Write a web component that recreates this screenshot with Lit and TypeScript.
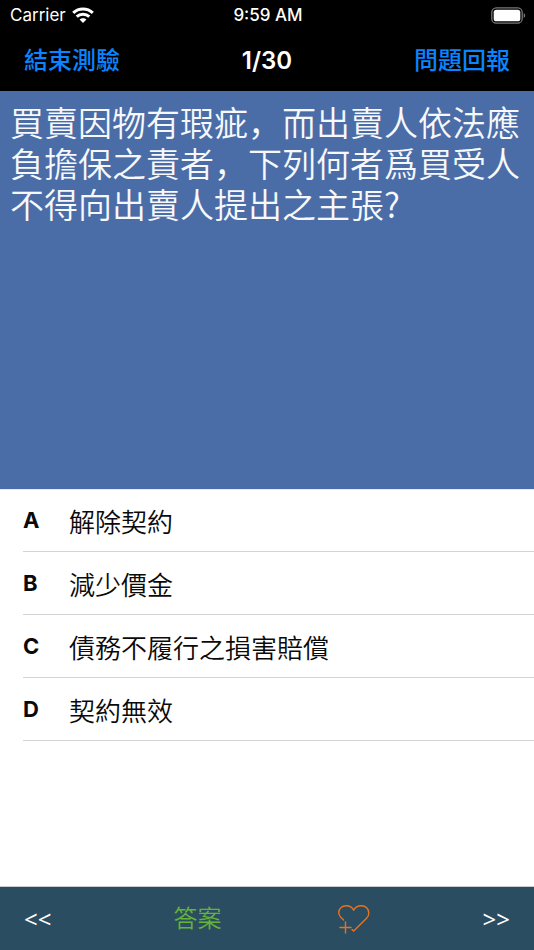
import { LitElement, html, css, svg } from "lit";
import { customElement, property, state } from "lit/decorators.js";

interface Choice {
  key: string;
  text: string;
}

const wifiIcon = svg`
  <svg class="wifi" viewBox="0 0 22 16" width="22" height="16" aria-hidden="true">
    <g fill="none" stroke="#fff" stroke-width="3">
      <path d="M1.2 5.8C6.7 .6 15.3 .6 20.8 5.8" />
      <path d="M4.7 9.6C8.2 6.3 13.8 6.3 17.3 9.6" />
    </g>
    <path fill="#fff" d="M11 16l-3.4-3.5c1.9-1.8 4.9-1.8 6.8 0z" />
  </svg>`;

const batteryIcon = svg`
  <svg class="battery" viewBox="0 0 35 17" width="35" height="17" aria-hidden="true">
    <rect x=".8" y=".8" width="30.4" height="15.4" rx="4.5" fill="none" stroke="#777" stroke-width="1.3" />
    <rect x="2.7" y="2.7" width="26.6" height="11.6" rx="2.6" fill="#fff" />
    <path d="M32.7 6.2c2 .6 2 4 0 4.6z" fill="#777" />
  </svg>`;

const heartIcon = svg`
  <svg class="heart" viewBox="0 0 34 30" width="34" height="30" aria-hidden="true">
    <g fill="none" stroke="#e8731f" stroke-width="1.4" stroke-linecap="round" stroke-linejoin="round">
      <path d="M6.6 15.9L4 13.4C2.5 11.9 1.7 10.4 1.7 8.6C1.7 4.6 5 1.7 9 1.7C12.5 1.7 15.3 3.2 16.7 6.2C18.1 3.2 20.9 1.7 24.4 1.7C28.6 1.7 31.8 4.9 31.8 9C31.8 11.3 31 12.9 29.6 14.3L16.7 27L15 25.6" />
      <path d="M8.5 18v11M3 23.5h11" />
    </g>
  </svg>`;

@customElement("status-bar")
export class StatusBar extends LitElement {
  static styles = css`
    :host {
      display: grid;
      grid-template-columns: 1fr auto 1fr;
      align-items: center;
      height: 30px;
      padding: 0 8px 0 10px;
      color: #fff;
      font: 17px/30px Inter, Roboto, sans-serif;
    }
    .carrier {
      display: flex;
      align-items: center;
      gap: 6px;
    }
    .time {
      font-weight: 500;
    }
    .battery {
      justify-self: end;
    }
  `;

  render() {
    return html`
      <span class="carrier">Carrier ${wifiIcon}</span>
      <span class="time">9:59 AM</span>
      ${batteryIcon}
    `;
  }
}

@customElement("choice-list")
export class ChoiceList extends LitElement {
  static styles = css`
    :host {
      display: block;
    }
    .list {
      margin: 0;
      padding: 0 0 0 23px;
      list-style: none;
    }
    .item {
      border-bottom: 1px solid #d4d4d6;
    }
    .choice {
      display: grid;
      grid-template-columns: 46px 1fr;
      align-items: center;
      width: 100%;
      height: 62px;
      padding: 0;
      border: 0;
      background: none;
      color: #0a0a0a;
      text-align: left;
      cursor: pointer;
    }
    .key {
      font: 700 22px/30px Inter, sans-serif;
    }
    .text {
      padding-top: 2px;
      font: 350 26px/36px "Noto Sans CJK SC", sans-serif;
    }
  `;

  @property({ attribute: false }) choices: Choice[] = [];

  render() {
    return html`
      <ul class="list">
        ${this.choices.map(
          (c) => html`
            <li class="item">
              <button class="choice" type="button">
                <span class="key">${c.key}</span>
                <span class="text">${c.text}</span>
              </button>
            </li>
          `
        )}
      </ul>
    `;
  }
}

@customElement("app-root")
export class AppRoot extends LitElement {
  static styles = css`
    :host {
      display: flex;
      flex-direction: column;
      min-height: 100vh;
      background: #fff;
      font-family: Inter, "Noto Sans CJK SC", sans-serif;
    }
    button {
      margin: 0;
      padding: 0;
      border: 0;
      background: none;
      font-family: inherit;
      cursor: pointer;
    }
    .top {
      height: 91px;
      background: #000;
    }
    .nav {
      display: grid;
      grid-template-columns: 1fr auto 1fr;
      align-items: center;
      height: 61px;
      padding: 0 24px;
    }
    .link {
      justify-self: start;
      color: #0a84ff;
      font-size: 24px;
      font-weight: 500;
      line-height: 36px;
    }
    .link.end {
      justify-self: end;
    }
    .title {
      margin: 0;
      color: #fff;
      font-size: 24px;
      font-weight: 600;
      line-height: 36px;
    }
    .question {
      flex: 1 1 0;
      background: #4a6da7;
    }
    .prompt {
      margin: 0;
      padding: 10px;
      color: #f7f8fb;
      font: 350 34px/41px "Noto Sans CJK SC", sans-serif;
    }
    .answers {
      flex: 1 1 0;
      box-shadow: inset 0 1px #e3eafa, inset 0 -1px #c9cdd0;
    }
    .bar {
      display: flex;
      align-items: center;
      justify-content: space-between;
      height: 63px;
      padding: 0 24px;
      background: #2a4d61;
    }
    .step {
      color: #fff;
      font-family: "Noto Sans", sans-serif;
      font-size: 24px;
      line-height: 36px;
      text-align: left;
    }
    .step.back {
      min-width: 38px;
    }
    .reveal {
      color: #65b33a;
      font-size: 24px;
      font-weight: 350;
      line-height: 36px;
    }
    .favorite {
      padding-left: 4px;
    }
    .heart {
      display: block;
    }
  `;

  @state() private choices: Choice[] = [
    { key: "A", text: "解除契約" },
    { key: "B", text: "減少價金" },
    { key: "C", text: "債務不履行之損害賠償" },
    { key: "D", text: "契約無效" },
  ];

  render() {
    return html`
      <header class="top">
        <status-bar></status-bar>
        <nav class="nav">
          <button class="link" type="button">結束測驗</button>
          <h1 class="title">1/30</h1>
          <button class="link end" type="button">問題回報</button>
        </nav>
      </header>
      <section class="question">
        <p class="prompt">買賣因物有瑕疵，而出賣人依法應負擔保之責者，下列何者爲買受人不得向出賣人提出之主張?</p>
      </section>
      <main class="answers">
        <choice-list .choices=${this.choices}></choice-list>
      </main>
      <footer class="bar">
        <button class="step back" type="button">&lt;&lt;</button>
        <button class="reveal" type="button">答案</button>
        <button class="favorite" type="button" aria-label="加入最愛">${heartIcon}</button>
        <button class="step" type="button">&gt;&gt;</button>
      </footer>
    `;
  }
}
